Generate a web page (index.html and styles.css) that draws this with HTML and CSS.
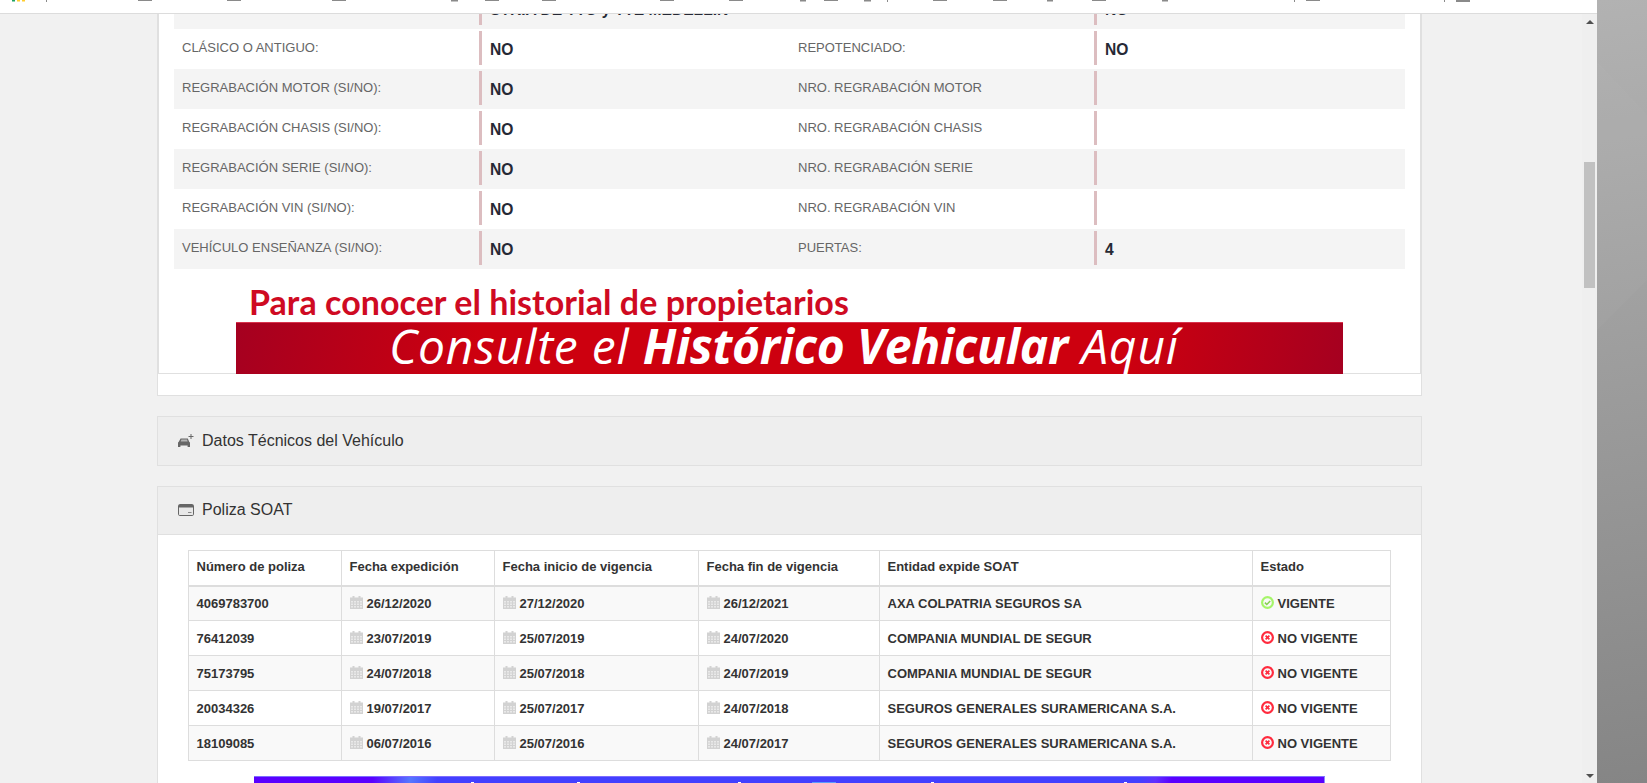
FILE: index.html
```html
<!DOCTYPE html>
<html lang="es">
<head>
<meta charset="utf-8">
<title>Consulta de vehículo</title>
<link rel="stylesheet" href="styles.css">
</head>
<body>
<svg class="sprite" aria-hidden="true">
  <symbol id="cal" viewBox="0 0 13 13">
    <path fill="#d2d2d2" d="M0 1.5h2.5V0h2v1.5h4V0h2v1.5H13V13H0z"/>
    <path fill="#e9e9e9" d="M1 5h2v1.5H1zM4 5h2v1.5H4zM7 5h2v1.5H7zM10 5h2v1.5h-2zM1 7.5h2V9H1zM4 7.5h2V9H4zM7 7.5h2V9H7zM10 7.5h2V9h-2zM1 10h2v1.5H1zM4 10h2v1.5H4zM7 10h2v1.5H7zM10 10h2v1.5h-2z"/>
  </symbol>
  <symbol id="ok" viewBox="0 0 13 13">
    <circle cx="6.5" cy="6.5" r="5.4" fill="none" stroke="#a6f56a" stroke-width="2.2"/>
    <path d="M3.9 6.600l1.900 1.900L9.200 5" fill="none" stroke="#86cf52" stroke-width="1.500"/>
  </symbol>
  <symbol id="no" viewBox="0 0 13 13">
    <circle cx="6.5" cy="6.5" r="5.4" fill="none" stroke="#ff2b3e" stroke-width="2.2"/>
    <path d="M4.600 4.600l3.800 3.800M8.400 4.600L4.600 8.400" fill="none" stroke="#ff2b3e" stroke-width="1.700"/>
  </symbol>
</svg>

<div class="window">
  <div class="topbar">
    <svg class="topmarks" width="1597" height="2" viewBox="0 0 1597 2" aria-hidden="true">
      <rect x="12" width="3" height="1.5" fill="#1fa463"/>
      <rect x="17" width="3" height="1.5" fill="#ffcd2f"/>
      <rect x="22" width="3" height="1.5" fill="#ffcd2f"/>
      <g fill="#8a8a8a">
        <rect x="46" width="1" height="2"/>
        <rect x="138" width="14" height="1"/><rect x="227" width="14" height="1"/><rect x="332" width="14" height="1"/>
        <rect x="451" width="7" height="1.5"/><rect x="485" width="14" height="1"/><rect x="542" width="14" height="1"/>
        <rect x="660" width="14" height="1"/><rect x="729" width="14" height="1"/><rect x="800" width="6" height="1.5"/>
        <rect x="824" width="14" height="1"/><rect x="864" width="7" height="1.5"/><rect x="887" width="1" height="2"/>
        <rect x="933" width="14" height="1"/><rect x="993" width="14" height="1"/><rect x="1047" width="6" height="1.5"/>
        <rect x="1092" width="14" height="1"/><rect x="1162" width="6" height="1.5"/><rect x="1294" width="1" height="2"/>
        <rect x="1306" width="14" height="1"/><rect x="1444" width="1" height="2"/><rect x="1456" width="14" height="2"/>
      </g>
    </svg>
  </div>

  <main class="content">
    <section class="outer">
      <div class="inner">
        <div class="grid">
          <div class="row">
            <div class="lbl"></div><div class="val">STRIA DE TTO y TTE MEDELLIN</div>
            <div class="lbl"></div><div class="val">NO</div>
          </div>
          <div class="row">
            <div class="lbl">CLÁSICO O ANTIGUO:</div><div class="val">NO</div>
            <div class="lbl">REPOTENCIADO:</div><div class="val">NO</div>
          </div>
          <div class="row">
            <div class="lbl">REGRABACIÓN MOTOR (SI/NO):</div><div class="val">NO</div>
            <div class="lbl">NRO. REGRABACIÓN MOTOR</div><div class="val"></div>
          </div>
          <div class="row">
            <div class="lbl">REGRABACIÓN CHASIS (SI/NO):</div><div class="val">NO</div>
            <div class="lbl">NRO. REGRABACIÓN CHASIS</div><div class="val"></div>
          </div>
          <div class="row">
            <div class="lbl">REGRABACIÓN SERIE (SI/NO):</div><div class="val">NO</div>
            <div class="lbl">NRO. REGRABACIÓN SERIE</div><div class="val"></div>
          </div>
          <div class="row">
            <div class="lbl">REGRABACIÓN VIN (SI/NO):</div><div class="val">NO</div>
            <div class="lbl">NRO. REGRABACIÓN VIN</div><div class="val"></div>
          </div>
          <div class="row">
            <div class="lbl">VEHÍCULO ENSEÑANZA (SI/NO):</div><div class="val">NO</div>
            <div class="lbl">PUERTAS:</div><div class="val">4</div>
          </div>
        </div>
        <div class="promo">
          <div class="promo-title">Para conocer el historial de propietarios</div>
          <div class="promo-band">Consulte el <b>Histórico Vehicular</b> Aquí</div>
        </div>
      </div>
    </section>

    <section class="head">
      <svg class="head-icon" width="16" height="14" viewBox="0 0 16 14" aria-hidden="true">
        <path fill="#666" d="M2.600 4.500h7.200l1.400 3.200c.6.3.8.8.8 1.400V13H9.600v-1.400H2.400V13H0V9.100c0-.6.2-1.100.8-1.400z"/>
        <path fill="#b4b4b4" d="M3.400 5.600h5.600l.7 1.800H2.700z"/>
        <path fill="none" stroke="#666" d="M13 0v5M10.500 2.500h5"/>
      </svg>
      <h2 class="head-title">Datos Técnicos del Vehículo</h2>
    </section>

    <section class="soat">
      <div class="head head-soat">
        <svg class="head-icon" width="16" height="12" viewBox="0 0 16 12" aria-hidden="true">
          <rect x=".5" y=".5" width="15" height="11" rx="1.200" fill="#e8e8e8" stroke="#666"/>
          <rect x="1" y="1" width="14" height="2.500" fill="#666"/>
          <rect x="10" y="8" width="3.500" height="1" fill="#888"/>
        </svg>
        <h2 class="head-title">Poliza SOAT</h2>
      </div>
      <div class="soat-body">
        <table class="tbl">
          <colgroup>
            <col class="c1"><col class="c2"><col class="c3"><col class="c4"><col class="c5"><col class="c6">
          </colgroup>
          <thead>
            <tr><th>Número de poliza</th><th>Fecha expedición</th><th>Fecha inicio de vigencia</th><th>Fecha fin de vigencia</th><th>Entidad expide SOAT</th><th>Estado</th></tr>
          </thead>
          <tbody>
            <tr>
              <td>4069783700</td>
              <td><svg class="ic"><use href="#cal"/></svg>26/12/2020</td>
              <td><svg class="ic"><use href="#cal"/></svg>27/12/2020</td>
              <td><svg class="ic"><use href="#cal"/></svg>26/12/2021</td>
              <td>AXA COLPATRIA SEGUROS SA</td>
              <td><svg class="ic"><use href="#ok"/></svg>VIGENTE</td>
            </tr>
            <tr>
              <td>76412039</td>
              <td><svg class="ic"><use href="#cal"/></svg>23/07/2019</td>
              <td><svg class="ic"><use href="#cal"/></svg>25/07/2019</td>
              <td><svg class="ic"><use href="#cal"/></svg>24/07/2020</td>
              <td>COMPANIA MUNDIAL DE SEGUR</td>
              <td><svg class="ic"><use href="#no"/></svg>NO VIGENTE</td>
            </tr>
            <tr>
              <td>75173795</td>
              <td><svg class="ic"><use href="#cal"/></svg>24/07/2018</td>
              <td><svg class="ic"><use href="#cal"/></svg>25/07/2018</td>
              <td><svg class="ic"><use href="#cal"/></svg>24/07/2019</td>
              <td>COMPANIA MUNDIAL DE SEGUR</td>
              <td><svg class="ic"><use href="#no"/></svg>NO VIGENTE</td>
            </tr>
            <tr>
              <td>20034326</td>
              <td><svg class="ic"><use href="#cal"/></svg>19/07/2017</td>
              <td><svg class="ic"><use href="#cal"/></svg>25/07/2017</td>
              <td><svg class="ic"><use href="#cal"/></svg>24/07/2018</td>
              <td>SEGUROS GENERALES SURAMERICANA S.A.</td>
              <td><svg class="ic"><use href="#no"/></svg>NO VIGENTE</td>
            </tr>
            <tr>
              <td>18109085</td>
              <td><svg class="ic"><use href="#cal"/></svg>06/07/2016</td>
              <td><svg class="ic"><use href="#cal"/></svg>25/07/2016</td>
              <td><svg class="ic"><use href="#cal"/></svg>24/07/2017</td>
              <td>SEGUROS GENERALES SURAMERICANA S.A.</td>
              <td><svg class="ic"><use href="#no"/></svg>NO VIGENTE</td>
            </tr>
          </tbody>
        </table>
        <div class="promo2">
          <svg class="specks" width="1070" height="6" viewBox="0 0 1070 6" aria-hidden="true">
            <g fill="#fff">
              <rect x="217" y="5" width="3" height="1"/><rect x="323" y="5" width="3" height="1"/>
              <rect x="484" y="5" width="3" height="1"/><rect x="677" y="5" width="3" height="1"/>
              <rect x="870" y="5" width="3" height="1"/>
            </g>
            <rect x="558" y="5" width="24" height="1" fill="#5a9cff"/>
          </svg>
        </div>
      </div>
    </section>
  </main>

  <div class="scrollbar">
    <span class="arrow arrow-up"></span>
    <span class="track"><span class="thumb"></span></span>
    <span class="arrow arrow-down"></span>
  </div>

  <aside class="desktop">
    <svg class="facet" width="50" height="400" viewBox="0 0 50 400" aria-hidden="true">
      <polygon points="0,62 50,115 50,280 0,330" fill="#fff" fill-opacity=".025"/>
    </svg>
  </aside>
</div>
</body>
</html>
```

FILE: styles.css
```css
* { box-sizing: border-box; }
html, body { margin: 0; height: 100%; overflow: hidden; }
body { font-family: "Liberation Sans", Arial, sans-serif; color: #333; background: #f1f1f1; }

.sprite { display: none; }

.window { position: relative; display: flex; width: 1647px; height: 783px; overflow: hidden; }

.topbar {
  position: absolute; left: 0; top: 0; z-index: 5;
  width: 1597px; height: 14px;
  background: #fff; border-bottom: 1px solid #dcdcdc;
}
.topmarks { display: block; }

.content { flex: 0 0 1582px; padding-left: 157px; padding-right: 160px; margin-top: -13px; }

.outer { background: #fff; border: 1px solid #e0e0e0; padding-bottom: 21px; }
.inner { border: 1px solid #e0e0e0; border-top: 0; padding: 1px 15px 0; height: 386px; }

.row { display: grid; grid-template-columns: 305px 311px 304px 311px; height: 40px; }
.row:nth-child(odd) { background: #f4f4f4; }
.lbl { padding-left: 8px; font-size: 13px; line-height: 38px; color: #666; }
.val {
  position: relative; padding-left: 11px;
  font-size: 15.6px; font-weight: 700; line-height: 42px; color: #262935; white-space: nowrap;
  background: linear-gradient(#dcbdc0, #dcbdc0) left 2px / 3px 34px no-repeat;
}

.promo { width: 1107px; margin: 16px auto 0; }
.promo-title {
  height: 37px; padding-left: 13px;
  font-family: Lato, sans-serif; font-size: 34px; font-weight: 700; line-height: 33px;
  color: #cf0a22; white-space: nowrap; letter-spacing: .05px;
}
.promo-band {
  height: 52px; padding-left: 153px;
  border-top: 1px solid #d8324c;
  background: linear-gradient(100deg, #a50020 0, #cd000f 22%, #cd000f 80%, #a50020 100%);
  font-family: "Open Sans", sans-serif; font-size: 48px; font-weight: 400; font-style: italic; line-height: 46px;
  color: #fff; white-space: nowrap; letter-spacing: .8px;
}
.promo-band b { font-weight: 700; letter-spacing: -.25px; }

.head {
  display: flex; align-items: center; gap: 8px;
  height: 50px; margin-top: 20px; padding: 0 0 1px 20px;
  background: #eee; border: 1px solid #e0e0e0;
}
.head-icon { flex: none; }
.head-title { margin: 0; font-size: 16px; font-weight: 400; color: #333; }

.soat { margin-top: 20px; background: #fff; border: 1px solid #e0e0e0; border-top: 0; }
.head-soat { margin: 0 -1px; height: 49px; }
.soat-body { padding-top: 15px; }

.tbl { width: 1202px; margin: 0 auto; border-collapse: collapse; table-layout: fixed; font-size: 13px; font-weight: 700; color: #333; }
.c1, .c2 { width: 153px; }
.c3 { width: 204px; }
.c4 { width: 181px; }
.c5 { width: 373px; }
.c6 { width: 138px; }
.tbl th, .tbl td { border: 1px solid #ddd; padding: 0 0 0 7.500px; text-align: left; white-space: nowrap; }
.tbl th { height: 35px; padding-bottom: 2px; border-bottom-width: 2px; }
.tbl td { height: 35px; }
.tbl tbody tr:nth-child(odd) { background: #f9f9f9; }
.ic { display: inline-block; width: 13px; height: 13px; margin-right: 4px; vertical-align: -1px; }

.promo2 {
  width: 1071px; height: 60px; margin: 15px auto 0;
  border-top: 1px solid #7d6cff; border-right: 1px solid #8a8aff;
  background: linear-gradient(100deg, #5a00ff 0, #5a00ff 11%, #5577ff 14.5%, #4340ff 17%, #4340ff 82%, #6030ff 83.500%, #5a00ff 85%);
}
.specks { display: block; }

.scrollbar { position: relative; flex: 0 0 15px; display: flex; flex-direction: column; background: #efefef; }
.arrow { flex: none; width: 0; height: 0; margin: 0 auto; border-left: 4px solid transparent; border-right: 4px solid transparent; }
.arrow-up { margin-top: 20px; border-bottom: 4px solid #505050; }
.arrow-down { margin-bottom: 5px; border-top: 4px solid #505050; }
.track { flex: 1; padding: 138px 2px 0; }
.thumb { display: block; height: 126px; background: #c1c1c1; }

.desktop { flex: 0 0 50px; background: linear-gradient(170deg, #b2b2b2 0, #858585 100%); }
.facet { display: block; }
```
